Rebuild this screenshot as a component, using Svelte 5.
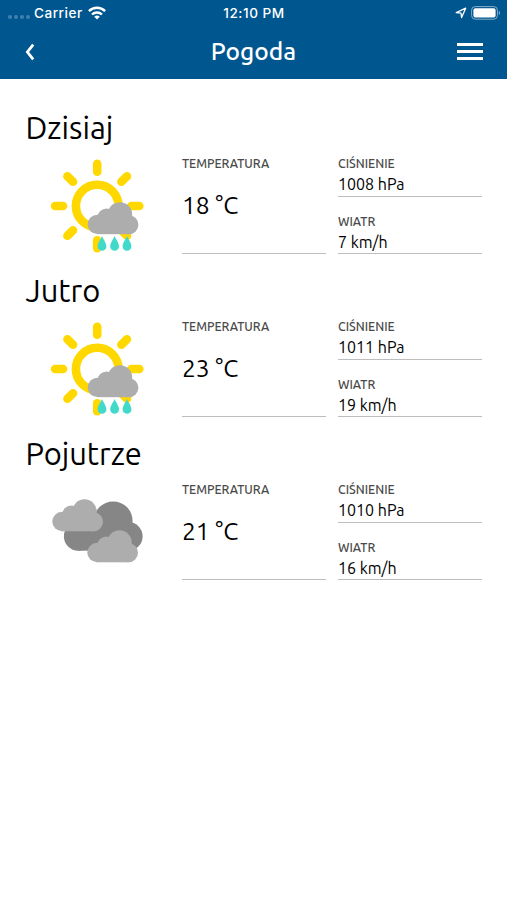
<script>
	const days = [
		{ name: 'Dzisiaj', icon: 'rain', temperature: 18, pressure: 1008, wind: 7 },
		{ name: 'Jutro', icon: 'rain', temperature: 23, pressure: 1011, wind: 19 },
		{ name: 'Pojutrze', icon: 'clouds', temperature: 21, pressure: 1010, wind: 16 }
	];

	const rays = [0, 45, 90, 135, 180, 225, 270, 315];
	const drops = [52, 64.6, 77];
</script>

{#snippet cloud(x, y)}
	<g transform="translate({x} {y})" fill="#adadad">
		<circle cx="9.7" cy="22.2" r="9.7" />
		<circle cx="19" cy="15.4" r="9.2" />
		<circle cx="32.2" cy="12.3" r="12.3" />
		<circle cx="41.2" cy="22.5" r="9.5" />
		<rect x="9.7" y="15" width="31.5" height="17" />
	</g>
{/snippet}

<div class="app">
	<header>
		<div class="status">
			<div class="carrier">
				<span class="signal"><i></i><i></i><i></i><i></i></span>
				<span>Carrier</span>
				<svg viewBox="0 0 18 14" width="18" height="14">
					<g fill="none" stroke="#fff" stroke-width="2.4">
						<path d="M.9 5.1a11.6 11.6 0 0 1 16.2 0" />
						<path d="M4 8.5a7.2 7.2 0 0 1 10 0" />
					</g>
					<path d="M9 13.6 6.2 10.8a4 4 0 0 1 5.6 0z" fill="#fff" />
				</svg>
			</div>
			<span>12:10 PM</span>
			<div class="power">
				<svg viewBox="0 0 12 12" width="12" height="12">
					<path d="M10.7 1.2 6.6 10.6 6 6.1 1.2 5.6z" fill="none" stroke="#fff" stroke-width="1.3" stroke-linejoin="round" />
				</svg>
				<svg viewBox="0 0 30 14" width="30" height="14">
					<rect x=".6" y=".6" width="25.8" height="12.6" rx="3.6" fill="none" stroke="#86aecb" stroke-width="1" />
					<rect x="2.4" y="2.3" width="22.2" height="9.2" rx="2" fill="#fff" />
					<path d="M27.8 4.8a2.4 2.4 0 0 1 0 4.2z" fill="#86aecb" />
				</svg>
			</div>
		</div>
		<nav>
			<svg viewBox="0 0 10 18" width="10" height="18">
				<path d="M8.2 1.6 2.4 9l5.8 7.4" fill="none" stroke="#fff" stroke-width="2.8" />
			</svg>
			<h1>Pogoda</h1>
			<div class="menu"><i></i><i></i><i></i></div>
		</nav>
	</header>

	<main>
		{#each days as day}
			<section>
				<h2>{day.name}</h2>
				<div class="row">
					<svg class="icon" viewBox="0 0 94 94" width="94" height="94">
						{#if day.icon === 'rain'}
							<g stroke="#ffd800" stroke-width="8.6" fill="none" stroke-linecap="round">
								<circle cx="47.2" cy="47" r="21.3" />
								{#each rays as angle}
									<path d="M47.2 12.8V4.9" transform="rotate({angle} 47.2 47)" />
								{/each}
							</g>
							{@render cloud(37.7, 43.2)}
							{#each drops as x}
								<path
									transform="translate({x} 77)"
									d="M0 0C1.2 3.6 4.4 6.6 4.4 10.4a4.4 4.4 0 0 1-8.8 0C-4.4 6.6-1.2 3.6 0 0z"
									fill="#40d9ca"
								/>
							{/each}
						{:else}
							<g fill="#868686">
								<circle cx="28.2" cy="51.4" r="14.3" />
								<circle cx="63.2" cy="35.8" r="19.4" />
								<circle cx="78.3" cy="51.4" r="14.3" />
								<rect x="28" y="38" width="50.3" height="27.7" />
							</g>
							{@render cloud(2.3, 14.3)}
							{@render cloud(37.3, 45.3)}
						{/if}
					</svg>
					<div class="cell">
						<span class="label">Temperatura</span>
						<span class="temp">{day.temperature} °C</span>
					</div>
					<div class="details">
						<div class="cell">
							<span class="label">Ciśnienie</span>
							<span class="value">{day.pressure} hPa</span>
						</div>
						<div class="cell">
							<span class="label">Wiatr</span>
							<span class="value">{day.wind} km/h</span>
						</div>
					</div>
				</div>
			</section>
		{/each}
	</main>
</div>

<style>
	:global(body) {
		background: #fff;
	}
	.app {
		height: 900px;
		overflow: hidden;
		font-family: Ubuntu, 'Noto Sans', sans-serif;
		color: #000;
	}
	svg {
		display: block;
	}
	header {
		height: 79px;
		background: #00568f;
		color: #fff;
	}
	.status {
		display: grid;
		grid-template-columns: 1fr auto 1fr;
		align-items: center;
		height: 26px;
		padding: 0 7px 0 8px;
		font: 500 13.6px/26px Inter, sans-serif;
		letter-spacing: 0.5px;
	}
	.carrier {
		display: flex;
		align-items: center;
		gap: 5px;
	}
	.signal {
		display: flex;
		gap: 2px;
		padding-top: 8px;
		margin-right: -1px;
	}
	.signal i {
		width: 4px;
		height: 4px;
		border-radius: 50%;
		background: #4180ad;
	}
	.power {
		display: flex;
		align-items: center;
		justify-content: flex-end;
		gap: 4px;
		margin-right: -1px;
	}
	nav {
		display: grid;
		grid-template-columns: 1fr auto 1fr;
		align-items: center;
		height: 51px;
		padding: 0 24px;
	}
	nav > svg {
		margin-left: 1px;
	}
	h1 {
		margin: 0;
		font-size: 24.5px;
		font-weight: 500;
		line-height: 48px;
		padding-bottom: 2px;
	}
	.menu {
		display: flex;
		flex-direction: column;
		gap: 4px;
		justify-self: end;
	}
	.menu i {
		width: 26px;
		height: 3px;
		background: #fff;
	}
	main {
		padding: 29px 25px 0 26px;
	}
	section {
		height: 163px;
	}
	h2 {
		height: 40px;
		margin: 0;
		font-size: 30.9px;
		font-weight: 400;
		line-height: 40px;
		text-indent: -0.5px;
	}
	.row {
		display: grid;
		grid-template-columns: repeat(3, 144px);
		gap: 12px;
		height: 106px;
	}
	.icon {
		margin: 11px 0 0 24px;
	}
	.cell {
		box-sizing: border-box;
		display: flex;
		flex-direction: column;
		padding-top: 8px;
		border-bottom: 1px solid #bdbdbd;
	}
	.details .cell {
		height: 49px;
	}
	.details .cell + .cell {
		height: 57px;
		padding-top: 17px;
	}
	.label {
		font-size: 12.3px;
		font-weight: 500;
		line-height: 16px;
		text-transform: uppercase;
		color: #4a4a4a;
	}
	.value {
		font-size: 16px;
		line-height: 25px;
	}
	.temp {
		margin-top: 16px;
		font-size: 24.6px;
		line-height: 34px;
	}
</style>
